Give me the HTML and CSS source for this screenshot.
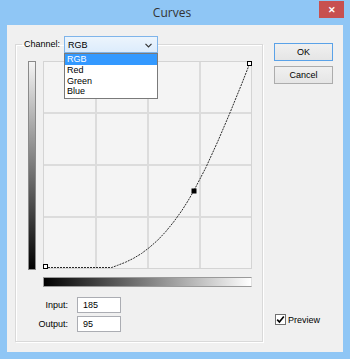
FILE: index.html
```html
<!DOCTYPE html>
<html>
<head>
<meta charset="utf-8">
<link rel="stylesheet" href="styles.css">
</head>
<body>
<div class="window">
  <div class="titlebar">
    <span></span>
    <span class="title">Curves</span>
    <span class="close">✕</span>
  </div>
  <div class="content">
    <fieldset class="group">
      <legend class="channel-row">
        <span class="label">Channel:</span>
        <span class="select">
          <span class="select-value">RGB</span>
          <svg class="chev" width="7" height="5" viewBox="0 0 7 5"><path d="M0.5 0.8 L3.5 3.8 L6.5 0.8" fill="none" stroke="#333" stroke-width="1.2"/></svg>
          <span class="dropdown">
            <span class="opt selected">RGB</span>
            <span class="opt">Red</span>
            <span class="opt">Green</span>
            <span class="opt">Blue</span>
          </span>
        </span>
      </legend>
      <div class="plot">
        <div class="vbar"></div>
        <div class="graph">
          <svg width="209" height="208" viewBox="0 0 209 208">
            <rect x="0.5" y="0.5" width="208" height="207" fill="#f4f4f4" stroke="#d4d4d4"/>
            <g stroke="#dcdcdc" stroke-width="2">
              <line x1="53" y1="1" x2="53" y2="207"/>
              <line x1="105" y1="1" x2="105" y2="207"/>
              <line x1="157" y1="1" x2="157" y2="207"/>
              <line x1="1" y1="52" x2="208" y2="52"/>
              <line x1="1" y1="104" x2="208" y2="104"/>
              <line x1="1" y1="156" x2="208" y2="156"/>
            </g>
            <polyline fill="none" stroke="#2a2a2a" stroke-width="1" stroke-dasharray="2 1" points="2,206.5 68.7,206.5 74.4,204.4 82.4,201.3 90.4,197.4 98.5,192.5 106.5,186.4 114.6,179.3 122.6,170.8 130.6,161 138.7,149.8 145.1,139.7 150.7,130 162.8,106.7 174.8,80.4 186.9,52 199,22.2 206.5,3"/>
            <rect x="0.5" y="203.5" width="4" height="4" fill="#fff" stroke="#000"/>
            <rect x="204.5" y="0.5" width="4" height="4" fill="#fff" stroke="#000"/>
            <rect x="148.5" y="127.5" width="5" height="5" fill="#000"/>
          </svg>
        </div>
        <div class="hbar"></div>
      </div>
      <div class="values">
        <span class="vlabel">Input:</span>
        <span class="field">185</span>
        <span class="vlabel">Output:</span>
        <span class="field">95</span>
      </div>
    </fieldset>
    <div class="side">
      <span class="btn default">OK</span>
      <span class="btn">Cancel</span>
      <label class="preview">
        <span class="check"><svg width="9" height="9" viewBox="0 0 9 9"><path d="M1.2 4.6 L3.4 7 L7.8 1.4" fill="none" stroke="#000" stroke-width="1.6"/></svg></span>
        <span>Preview</span>
      </label>
    </div>
  </div>
</div>
</body>
</html>
```

FILE: styles.css
```css
* { box-sizing: border-box; }
html, body {
  margin: 0;
  padding: 0;
  width: 350px;
  height: 359px;
  overflow: hidden;
  background: #8fc6f5;
  font-family: "Liberation Sans", Arial, sans-serif;
  font-size: 9px;
  color: #000;
}
.window {
  width: 350px;
  height: 359px;
  display: flex;
  flex-direction: column;
}
.titlebar {
  height: 25px;
  display: grid;
  grid-template-columns: 1fr auto 1fr;
  align-items: start;
  padding-right: 6px;
}
.title {
  font-family: "Open Sans", "Noto Sans", sans-serif;
  font-size: 12px;
  color: #333;
  line-height: 25px;
}
.close {
  justify-self: end;
  width: 25px;
  height: 17px;
  margin-top: 1px;
  background: #c75050;
  color: #fff;
  font-size: 9px;
  font-weight: bold;
  display: flex;
  align-items: center;
  justify-content: center;
}
.content {
  flex: 1;
  margin: 0 7px 7px 7px;
  background: #f0f0f0;
  display: flex;
  align-items: stretch;
  padding: 11px 0 10px 8px;
}
.group {
  margin: 0;
  width: 248px;
  border: 1px solid #d9d9d9;
  box-shadow: 1px 1px 0 #fff, inset 1px 1px 0 #fff;
  padding: 0 0 0 12px;
  min-width: 0;
}
.channel-row {
  display: flex;
  align-items: center;
  margin-left: -6px;
  padding: 0 0 0 2px;
  height: 17px;
}
.label { margin-right: 4px; line-height: 17px; }
.select {
  position: relative;
  width: 94px;
  height: 17px;
  border: 1px solid #7eb4ea;
  background: linear-gradient(#ecf4fc, #dcecfc);
  display: flex;
  align-items: center;
  justify-content: space-between;
  padding: 0 5px 0 3px;
}
.chev { margin-top: 1px; }
.dropdown {
  position: absolute;
  top: 16px;
  left: -1px;
  width: 94px;
  background: #fff;
  border: 1px solid #7a7a7a;
  display: flex;
  flex-direction: column;
  padding: 0 0 1px 0;
  z-index: 5;
}
.opt {
  height: 10.8px;
  line-height: 10.8px;
  padding-left: 2px;
}
.opt.selected { background: #3399ff; color: #fff; }
.plot {
  display: grid;
  grid-template-columns: 8px 209px;
  column-gap: 7px;
  margin-top: 8px;
}
.vbar {
  height: 209px;
  border: 1px solid #8a8a8a;
  background: linear-gradient(#f4f4f4, #000);
}
.graph { height: 208px; }
.graph svg { display: block; }
.hbar {
  grid-column: 2;
  height: 10px;
  margin-top: 7px;
  border: 1px solid #9a9a9a;
  border-right-color: #e0e0e0;
  background: linear-gradient(to right, #000, #fff);
}
.values {
  display: grid;
  grid-template-columns: 34px 44px;
  column-gap: 9px;
  row-gap: 3px;
  margin: 10px 0 0 6px;
  align-items: center;
}
.vlabel { justify-self: end; }
.field {
  height: 16px;
  border: 1px solid #abadb3;
  background: #fff;
  padding-left: 5px;
  line-height: 14px;
}
.side {
  display: flex;
  flex-direction: column;
  width: 59px;
  margin-left: 11px;
  padding-top: 7px;
  padding-bottom: 17px;
}
.btn {
  height: 18px;
  border: 1px solid #acacac;
  background: linear-gradient(#f0f0f0, #e5e5e5);
  display: flex;
  align-items: center;
  justify-content: center;
  margin-bottom: 5px;
}
.btn.default { border-color: #5aa2e8; }
.preview {
  margin-top: auto;
  display: flex;
  align-items: center;
  gap: 2px;
  padding-left: 1px;
}
.check {
  width: 11px;
  height: 11px;
  border: 1px solid #707070;
  background: #fff;
  display: flex;
  align-items: center;
  justify-content: center;
}
.check svg { display: block; }
```
